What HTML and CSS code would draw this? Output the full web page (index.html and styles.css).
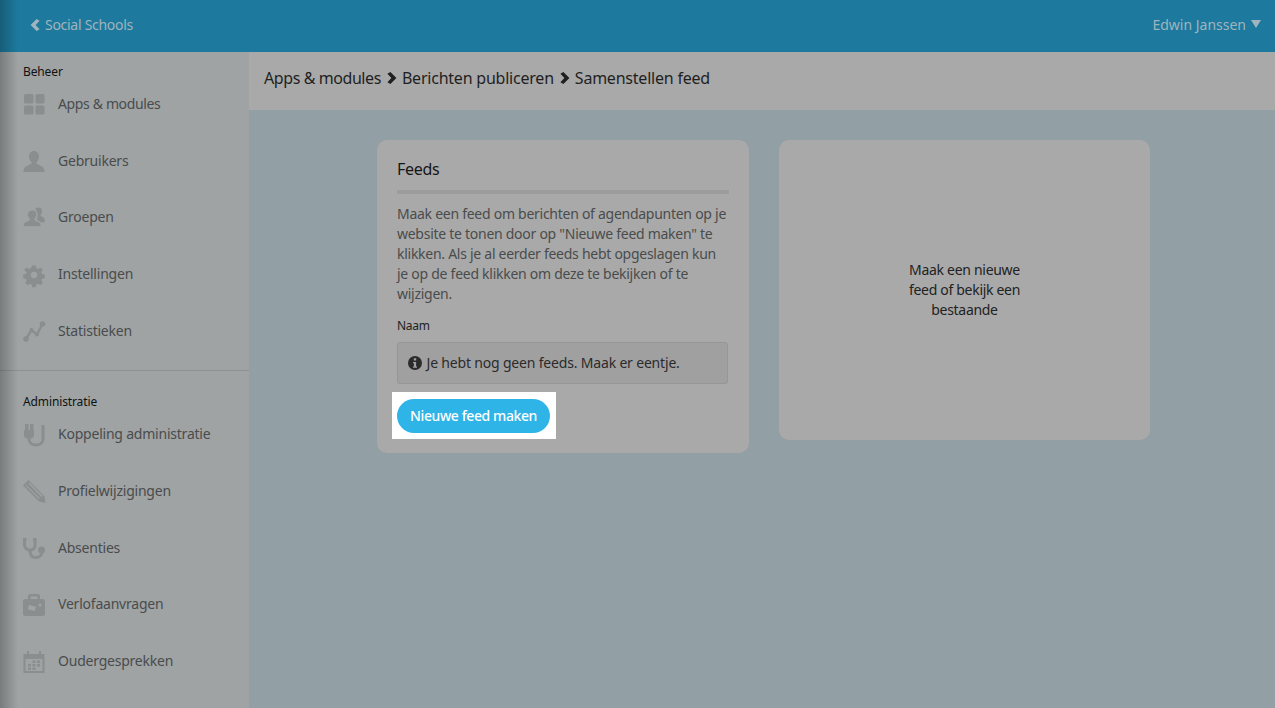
FILE: index.html
```html
<!DOCTYPE html>
<html lang="nl">
<head>
<meta charset="utf-8">
<title>Samenstellen feed</title>
<link rel="stylesheet" href="styles.css">
</head>
<body>
<div class="edge-shade"></div>
<header class="topbar">
  <a class="back">
    <svg class="back-icon" viewBox="0 0 10 12"><path d="M6.600 0 9.600 1.800 5.600 6l4 4.200-3 1.800L.6 6z"/></svg>
    <span>Social Schools</span>
  </a>
  <div class="user">
    <span>Edwin Janssen</span>
    <svg class="caret" viewBox="0 0 10 8"><path d="M0 0h10L5 8z"/></svg>
  </div>
</header>
<div class="body-row">
  <aside class="sidebar">
    <section class="side-section first">
      <div class="side-label">Beheer</div>
      <a class="side-item">
        <svg class="side-icon" viewBox="0 0 22 22"><rect x="1" y="0" width="9.500" height="9.500" rx="1.500"/><rect x="12.500" y="0" width="9" height="9.500" rx="1.500"/><rect x="1" y="11.500" width="9.500" height="9" rx="1.500"/><rect x="12.500" y="11.500" width="9" height="9" rx="1.500"/></svg>
        <span class="amp-text">Apps &amp; modules</span>
      </a>
      <a class="side-item">
        <svg class="side-icon" viewBox="0 0 22 22"><path d="M11 0c3 0 5 2.400 5 5.500 0 2.400-1 4.400-2.300 5.600-.5.5-.4 1.500.3 1.900l4.500 2.300c2 .9 3 2.700 3 5.700H.5c0-3 1-4.800 3-5.700L8 13c.7-.4.800-1.400.3-1.900C7 9.900 6 7.900 6 5.500 6 2.400 8 0 11 0z"/></svg>
        <span>Gebruikers</span>
      </a>
      <a class="side-item">
        <svg class="side-icon" viewBox="0 0 22 22"><path d="M15.500 .5c2.200 0 3.600 1.600 3.600 3.800 0 1.500-.6 2.800-1.500 3.700-.3.300-.2.900.2 1.100l2.200 1.100c1.200.6 1.900 1.900 1.900 3.800 0 1-1 1.500-3.600 1.500l-5-3c1-1.200 1.300-2.500 1.300-4.600 0-2.300-.7-4-2.200-5.600C12.500 1.500 13.800.5 15.500.5z"/><path class="cutout" d="M9.500 3c2.600 0 4.200 1.900 4.200 4.400 0 1.900-.8 3.400-1.900 4.400-.4.4-.3 1.100.3 1.400l3.700 1.700c1.600.7 2.200 2 2.200 4.800H.2c0-2.800.6-4.100 2.200-4.800l3.700-1.700c.6-.3.700-1 .3-1.400-1.100-1-1.900-2.500-1.900-4.400C4.500 4.900 6.900 3 9.500 3z"/></svg>
        <span>Groepen</span>
      </a>
      <a class="side-item">
        <svg class="side-icon" viewBox="0 0 22 22"><path fill-rule="evenodd" d="M9 .500h4l.6 3 1.900.8 2.600-1.700 2.800 2.800-1.700 2.600.8 1.900 3 .6v4l-3 .6-.8 1.900 1.700 2.600-2.800 2.800-2.600-1.700-1.900.8-.6 3H9l-.6-3-1.900-.8-2.600 1.700-2.800-2.800 1.700-2.600-.8-1.900-3-.6v-4l3-.6.8-1.900L.1 5.400l2.800-2.800 2.600 1.700 1.900-.8zM11 7.500a3.500 3.500 0 1 0 0 7 3.500 3.500 0 0 0 0-7z" transform="translate(1.100 1.100) scale(.9)"/></svg>
        <span>Instellingen</span>
      </a>
      <a class="side-item">
        <svg class="side-icon" viewBox="0 0 22 22"><path class="line" d="M3 18 8.500 9l5.500 4.500L19.500 3"/><circle cx="3" cy="18" r="2.800"/><circle cx="19.500" cy="3" r="2.800"/><circle cx="8.500" cy="9" r="2"/><circle cx="14" cy="13.500" r="2"/></svg>
        <span>Statistieken</span>
      </a>
    </section>
    <section class="side-section">
      <div class="side-label">Administratie</div>
      <a class="side-item">
        <svg class="side-icon" viewBox="0 0 22 22"><path d="M2 0h3.500v6H7V0h3.500v6H11v5c0 2-1.200 3.500-3 3.500H4c-1.800 0-3-1.500-3-3.500V6h1z"/><path class="line thick" d="M6 14v1c0 3.500 3 6 7 6s7-2.500 7-6V1"/></svg>
        <span>Koppeling administratie</span>
      </a>
      <a class="side-item">
        <svg class="side-icon" viewBox="0 0 22 22"><path fill-rule="evenodd" d="M5.500-1 21.500 15.500 22.500 22 16 20.500 0 4.500zM3.500 4 2.800 4.700 16 18l.8-.8zM6.500 1.500 5.500 2.500 18.500 16l1-1z"/></svg>
        <span>Profielwijzigingen</span>
      </a>
      <a class="side-item">
        <svg class="side-icon" viewBox="0 0 22 22"><path class="line thick" d="M3.500 1.500H1.500v5C1.500 10 4 12 7 12s5-2 5-5.500v-5H10"/><path class="line thick" d="M7 12c0 4 1.500 7.500 5.500 7.500S19 17 19 14"/><circle cx="18.500" cy="12" r="3.500"/></svg>
        <span>Absenties</span>
      </a>
      <a class="side-item">
        <svg class="side-icon" viewBox="0 0 22 22"><path fill-rule="evenodd" d="M7 0h8c1 0 2 1 2 2v3h3c1 0 2 1 2 2v13c0 1-1 2-2 2H2c-1 0-2-1-2-2V7c0-1 1-2 2-2h3V2c0-1 1-2 2-2zm.500 2.500V5h7V2.500zM6 11l7 1.800-1.200 4.200-7-1.800zM17 9.500a1.500 1.500 0 1 0 0 3 1.500 1.500 0 0 0 0-3z"/></svg>
        <span>Verlofaanvragen</span>
      </a>
      <a class="side-item">
        <svg class="side-icon" viewBox="0 0 22 22"><path fill-rule="evenodd" d="M4 0h2v3h10V0h2v3h3.500v19H.500V3H4zM2.500 8v12h17V8zM5 13h3v2.500H5zm4.500 0h3v2.500h-3zm4.500 0h3v2.500h-3zM9.500 9.500h3V12h-3zm4.500 0h3V12h-3zM5 16.500h3V19H5zm4.500 0h3V19h-3z"/></svg>
        <span>Oudergesprekken</span>
      </a>
      <a class="side-item">
        <svg class="side-icon" viewBox="0 0 22 22"><circle cx="11" cy="8" r="7"/></svg>
      </a>
    </section>
  </aside>
  <main class="main">
    <nav class="crumbs">
      <span class="amp-crumb">Apps &amp; modules</span>
      <svg class="crumb-sep" viewBox="0 0 10 12"><path d="M3.400 0 .4 1.800 4.400 6l-4 4.200 3 1.800L9.400 6z"/></svg>
      <span>Berichten publiceren</span>
      <svg class="crumb-sep" viewBox="0 0 10 12"><path d="M3.400 0 .4 1.800 4.400 6l-4 4.200 3 1.800L9.400 6z"/></svg>
      <span>Samenstellen feed</span>
    </nav>
    <div class="cards">
      <section class="card feeds">
        <h2 class="card-title">Feeds</h2>
        <p class="intro">Maak een feed om berichten of agendapunten op je website te tonen door op "Nieuwe feed maken" te klikken. Als je al eerder feeds hebt opgeslagen kun je op de feed klikken om deze te bekijken of te wijzigen.</p>
        <div class="field-label">Naam</div>
        <div class="notice">
          <svg class="notice-icon" viewBox="0 0 14 14"><path fill-rule="evenodd" d="M7 0a7 7 0 1 1 0 14A7 7 0 0 1 7 0zM5.800 2.300v2.200h2.400V2.300zM5 6v1.300h.9v3.200H5v1.300h4v-1.300h-.9V6z"/></svg>
          <span>Je hebt nog geen feeds. Maak er eentje.</span>
        </div>
        <div class="spotlight"><button class="primary">Nieuwe feed maken</button></div>
      </section>
      <section class="card placeholder">
        <p>Maak een nieuwe feed of bekijk een bestaande</p>
      </section>
    </div>
  </main>
</div>
</body>
</html>
```
FILE: styles.css
```css
* { box-sizing: border-box; }
html, body { margin: 0; height: 100%; overflow: hidden; }
body {
  position: relative;
  display: flex;
  flex-direction: column;
  height: 708px;
  font-family: "Noto Sans", "Open Sans", sans-serif;
  font-size: 14px;
  line-height: 20px;
  color: #4a4c4c;
  background: #929fa5;
}
.edge-shade {
  position: absolute;
  inset: 0 auto 0 0;
  width: 18px;
  background: linear-gradient(to right, rgba(0,0,0,.24), rgba(0,0,0,0));
  pointer-events: none;
}
.topbar {
  flex: none;
  height: 52px;
  display: flex;
  align-items: center;
  justify-content: space-between;
  padding: 0 14px 2px 30px;
  background: #1d7a9e;
  color: #9fb4bd;
}
.back, .user { display: flex; align-items: center; }
.back { letter-spacing: -.28px; }
.back-icon { width: 10px; height: 12px; margin-right: 5px; fill: #9fb4bd; }
.caret { width: 10px; height: 8px; margin: 0 0 3px 5px; fill: #9fb4bd; }
.body-row { flex: 1; display: flex; min-height: 0; }
.sidebar {
  flex: none;
  width: 249px;
  overflow: hidden;
  background: #9fa3a4;
  letter-spacing: -.22px;
}
.side-section { padding: 23.2px 0 0; }
.side-section.first {
  padding: 12px 0 6.5px;
  border-bottom: 1px solid #8d9192;
}
.side-label {
  padding-left: 23px;
  font-size: 12px;
  line-height: 16px;
  letter-spacing: -.12px;
  color: #111;
}
.side-item {
  display: flex;
  align-items: flex-start;
  height: 56.7px;
  padding: 14px 0 0 23px;
}
.amp-text { letter-spacing: -.36px; }
.side-icon {
  flex: none;
  width: 22px;
  height: 22px;
  margin-right: 13px;
  fill: #8b8e8f;
  overflow: visible;
}
.side-icon .line { fill: none; stroke: #8b8e8f; stroke-width: 2.400; }
.side-icon .line.thick { stroke-width: 3; }
.side-icon .cutout { stroke: #9fa3a4; stroke-width: 1; }
.main { flex: 1; min-width: 0; }
.crumbs {
  height: 58px;
  display: flex;
  align-items: center;
  padding: 0 0 6px 15px;
  background: #a9a9a9;
  font-size: 16px;
  letter-spacing: -.22px;
  color: #1f1f1f;
}
.amp-crumb { letter-spacing: -.42px; }
.crumb-sep { width: 10px; height: 12px; margin: 0 5px 0 6px; fill: #1f1f1f; }
.cards {
  display: flex;
  align-items: flex-start;
  gap: 30px;
  padding: 30px 0 0 128px;
}
.card { background: #a9a9a9; border-radius: 10px; }
.feeds { width: 372px; height: 313px; padding: 19px 20px 20px; letter-spacing: -.27px; }
.card-title {
  margin: 0;
  padding-bottom: 11px;
  border-bottom: 4px solid #9c9c9c;
  font-size: 16px;
  line-height: 20px;
  font-weight: 400;
  color: #161616;
}
.intro { margin: 10px 0 0; }
.field-label {
  margin-top: 14px;
  font-size: 12px;
  line-height: 16px;
  color: #222;
}
.notice {
  display: flex;
  align-items: center;
  width: 331px;
  height: 42px;
  margin-top: 8px;
  padding-left: 10px;
  border: 1px solid #969696;
  border-radius: 3px;
  background: #a0a0a0;
  letter-spacing: -.18px;
  color: #2b2b2b;
}
.notice-icon { width: 14px; height: 14px; margin-right: 4.500px; fill: #2b2b2b; }
.spotlight {
  display: inline-block;
  margin: 8px 0 0 -5px;
  padding: 7px 6px 6px 5px;
  background: #fff;
}
.primary {
  display: block;
  width: 153px;
  height: 34px;
  padding: 0;
  border: 0;
  border-radius: 17px;
  background: #2eb4e6;
  color: #fff;
  font: 500 14px/20px "Noto Sans", "Open Sans", sans-serif;
  letter-spacing: -.4px;
}
.placeholder {
  width: 371px;
  height: 300px;
  display: flex;
  align-items: center;
  justify-content: center;
  text-align: center;
  letter-spacing: -.3px;
  color: #222;
}
.placeholder p { width: 130px; margin: 0; }
```
